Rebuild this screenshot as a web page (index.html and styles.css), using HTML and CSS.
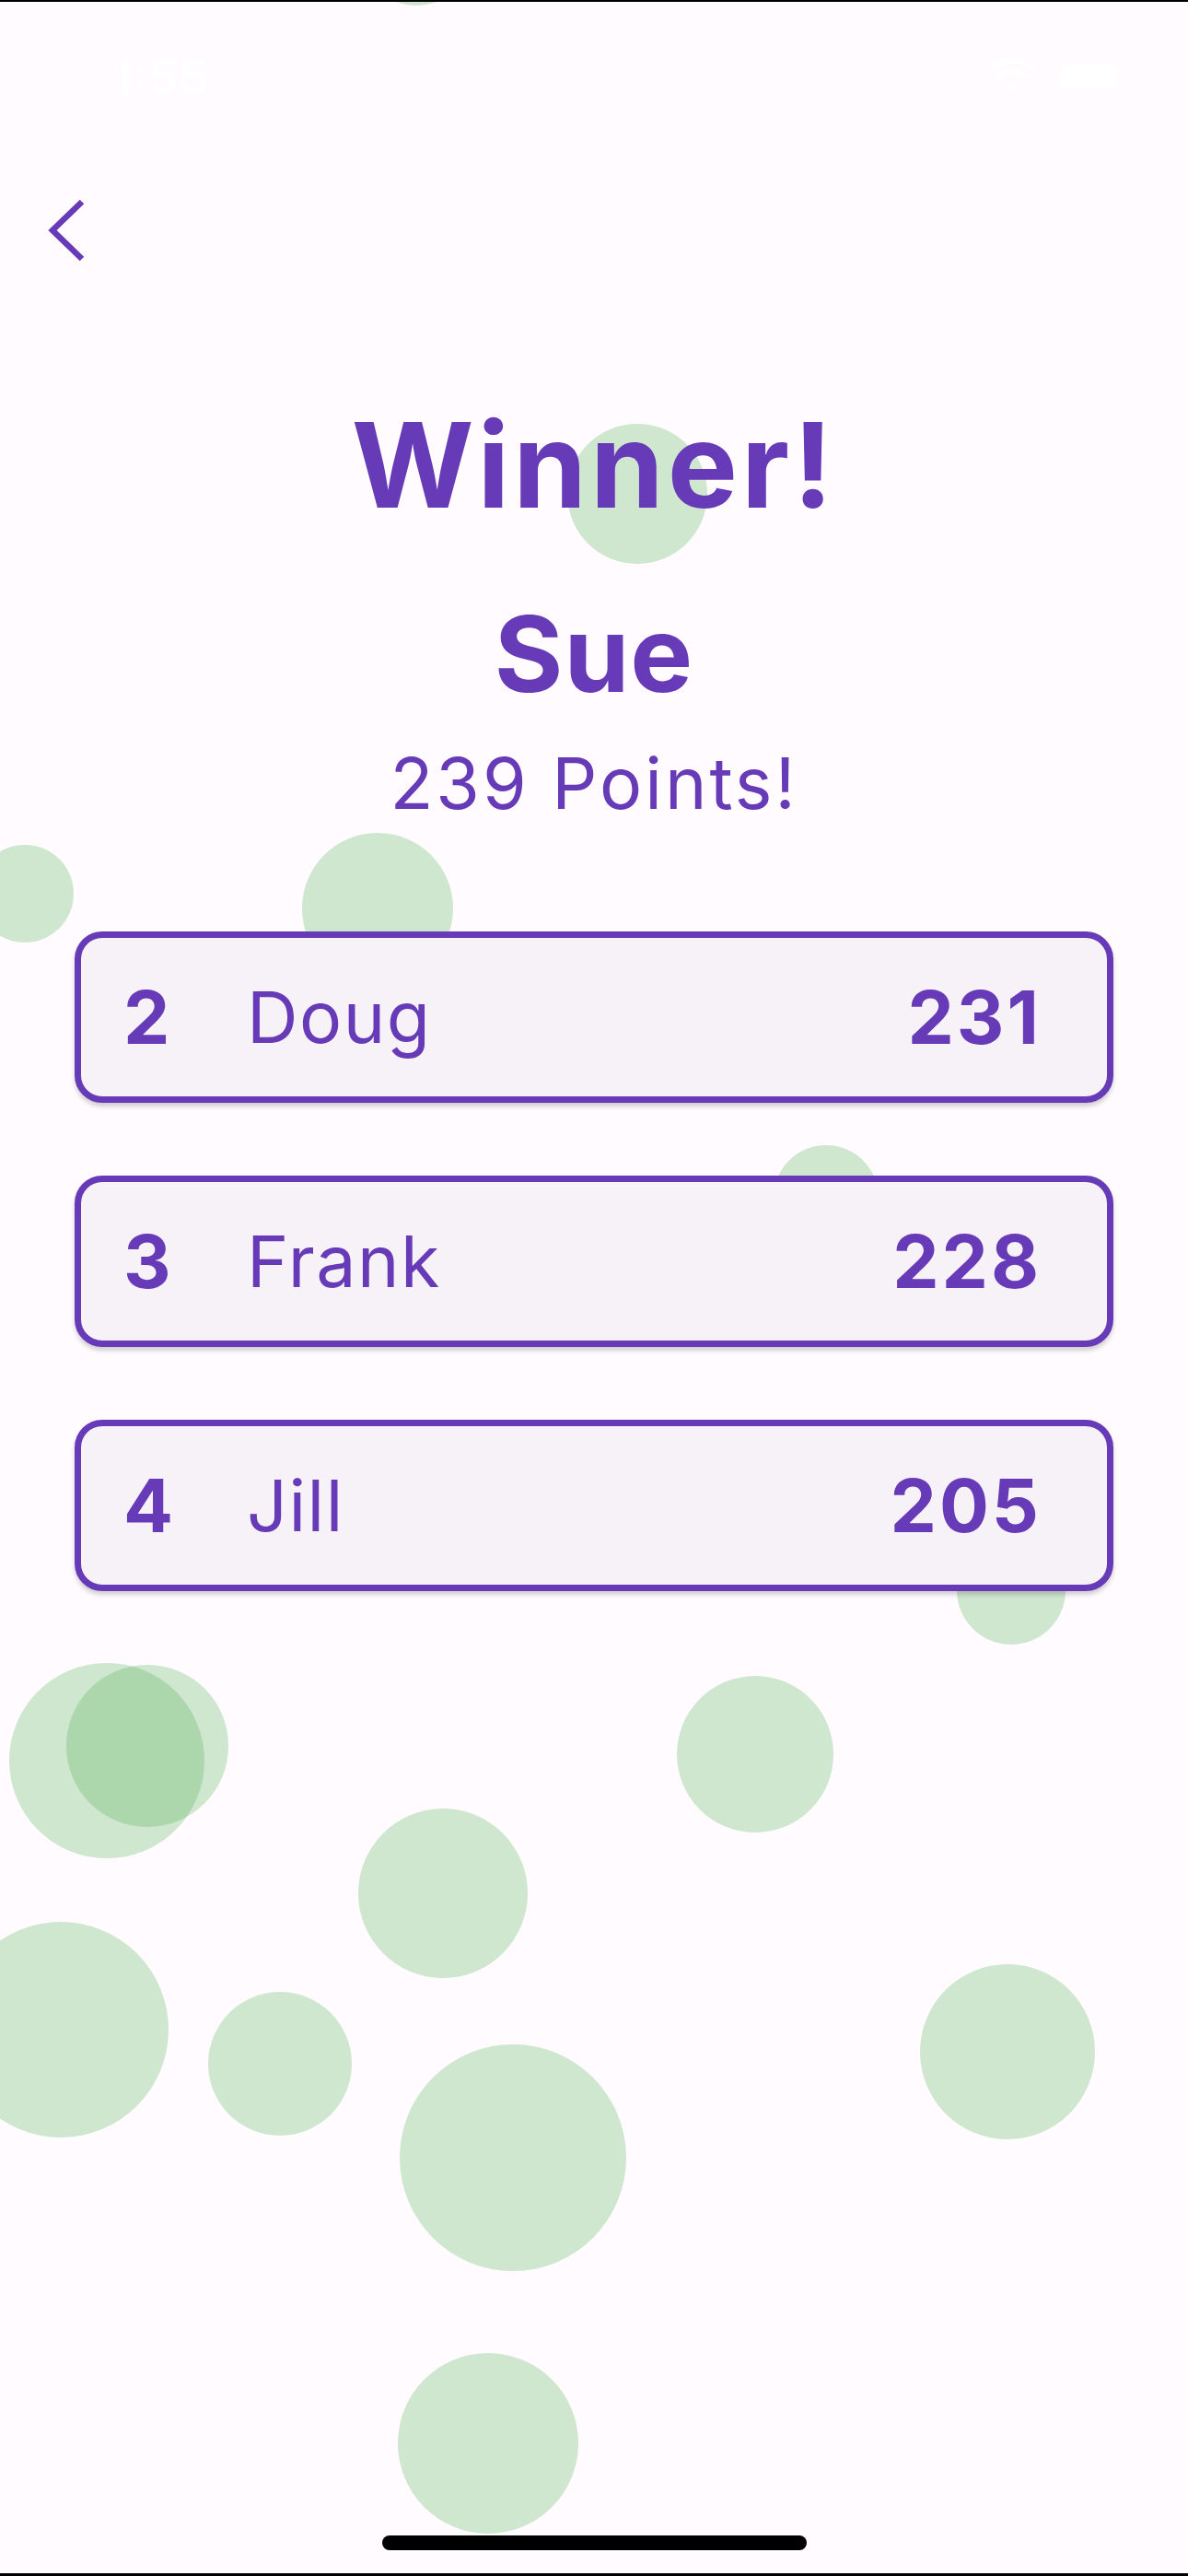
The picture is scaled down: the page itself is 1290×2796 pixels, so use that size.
FILE: index.html
```html
<!DOCTYPE html>
<html lang="en">
  <head>
    <meta charset="UTF-8" />
    <meta name="viewport" content="width=device-width, initial-scale=1.0" />
    <title>Results</title>
    <link rel="stylesheet" href="styles.css">
  </head>
  <body>
    <div class="screen">
      <div class="bubbles">
        <span class="bubble b1"></span>
        <span class="bubble b2"></span>
        <span class="bubble b3"></span>
        <span class="bubble b4"></span>
        <span class="bubble b5"></span>
        <span class="bubble b6"></span>
        <span class="bubble b7"></span>
        <span class="bubble b8"></span>
        <span class="bubble b9"></span>
        <span class="bubble b10"></span>
        <span class="bubble b11"></span>
        <span class="bubble b12"></span>
        <span class="bubble b13"></span>
        <span class="bubble b14"></span>
        <span class="bubble b15"></span>
      </div>

      <header class="status-bar">
        <span class="status-time">1:55</span>
        <div class="status-icons">
          <svg class="wifi" width="54" height="40" viewBox="0 0 54 40">
            <path d="M27 6c8.5 0 16 3.2 21.7 8.6l4-4.2C46 4 36.9 0 27 0S8 4 1.3 10.4l4 4.2C11 9.2 18.5 6 27 6z" fill="#fff" />
            <path d="M27 17.5c5.3 0 10 2 13.6 5.3l4-4.2C40 14.3 33.8 11.5 27 11.5s-13 2.8-17.6 7.1l4 4.2C17 19.5 21.7 17.5 27 17.5z" fill="#fff" />
            <path d="M27 29c2.2 0 4.1.8 5.6 2.1L27 37l-5.6-5.9C22.9 29.8 24.8 29 27 29z" fill="#fff" />
          </svg>
          <svg class="battery" width="84" height="40" viewBox="0 0 84 40">
            <rect x="2" y="2" width="72" height="36" rx="10" fill="none" stroke="#fff" stroke-width="3" opacity="0.6" />
            <rect x="7" y="7" width="62" height="26" rx="6" fill="#fff" />
            <path d="M78 14v12c2.5-1 4-3.4 4-6s-1.5-5-4-6z" fill="#fff" opacity="0.6" />
          </svg>
        </div>
      </header>

      <nav class="app-bar">
        <button class="back-button" aria-label="Back">
          <svg width="44" height="72" viewBox="0 0 44 72">
            <polyline points="38,5 6,36 38,67" fill="none" stroke="#673ab7" stroke-width="6.5" />
          </svg>
        </button>
      </nav>

      <main class="results">
        <h1 class="title">Winner!</h1>
        <h2 class="winner-name">Sue</h2>
        <p class="winner-points">239 Points!</p>

        <ol class="standings">
          <li class="player-card">
            <span class="rank">2</span>
            <span class="player-name">Doug</span>
            <span class="score">231</span>
          </li>
          <li class="player-card">
            <span class="rank">3</span>
            <span class="player-name">Frank</span>
            <span class="score">228</span>
          </li>
          <li class="player-card">
            <span class="rank">4</span>
            <span class="player-name">Jill</span>
            <span class="score">205</span>
          </li>
        </ol>
      </main>

      <div class="home-indicator"></div>
    </div>
  </body>
</html>
```

FILE: styles.css
```css
body {
  margin: 0;
  font-family: Inter, "Noto Sans", sans-serif;
  background-color: #fffbfe;
  color: #673ab7;
}

.screen {
  position: relative;
  width: 1290px;
  height: 2796px;
  box-sizing: border-box;
  border-top: 2px solid #000;
  border-bottom: 3px solid #000;
  overflow: hidden;
  background-color: #fffbfe;
}

/* confetti bubbles behind everything */
.bubbles {
  position: absolute;
  inset: 0;
  z-index: 0;
}

.bubble {
  position: absolute;
  border-radius: 50%;
  background-color: rgba(76, 175, 80, 0.27);
}

.b1 { left: 392px; top: -116px; width: 120px; height: 120px; }
.b2 { left: 616px; top: 458px; width: 152px; height: 152px; }
.b3 { left: -26px; top: 915px; width: 106px; height: 106px; }
.b4 { left: 328px; top: 902px; width: 164px; height: 164px; }
.b5 { left: 840px; top: 1241px; width: 114px; height: 114px; }
.b6 { left: 1039px; top: 1665px; width: 118px; height: 118px; }
.b7 { left: 10px; top: 1803px; width: 212px; height: 212px; }
.b8 { left: 72px; top: 1805px; width: 176px; height: 176px; }
.b9 { left: 735px; top: 1817px; width: 170px; height: 170px; }
.b10 { left: 389px; top: 1961px; width: 184px; height: 184px; }
.b11 { left: -51px; top: 2084px; width: 234px; height: 234px; }
.b12 { left: 226px; top: 2160px; width: 156px; height: 156px; }
.b13 { left: 434px; top: 2217px; width: 246px; height: 246px; }
.b14 { left: 999px; top: 2130px; width: 190px; height: 190px; }
.b15 { left: 432px; top: 2552px; width: 196px; height: 196px; }

.status-bar,
.app-bar,
.results {
  position: relative;
  z-index: 1;
}

.status-bar {
  height: 148px;
  box-sizing: border-box;
  padding: 56px 62px 0 122px;
  display: flex;
  justify-content: space-between;
  align-items: flex-start;
}

.status-time {
  font-size: 51px;
  font-weight: 700;
  line-height: 1;
  color: #fff;
}

.status-icons {
  display: flex;
  gap: 18px;
  padding-top: 5px;
}

.app-bar {
  height: 150px;
  box-sizing: border-box;
  padding: 64px 0 0 51px;
}

.back-button {
  padding: 0;
  border: none;
  background: none;
  cursor: pointer;
  display: block;
}

.back-button svg {
  display: block;
}

.results {
  display: flex;
  flex-direction: column;
  align-items: center;
  text-align: center;
}

.title {
  margin: 141px 0 0;
  font-size: 128px;
  font-weight: 700;
  line-height: 1;
  letter-spacing: 4px;
}

.winner-name {
  margin: 84px 0 0;
  font-size: 114px;
  font-weight: 700;
  line-height: 1;
  letter-spacing: 1px;
}

.winner-points {
  margin: 45px 0 0;
  font-size: 77px;
  font-weight: 400;
  line-height: 1;
  letter-spacing: 3px;
}

.standings {
  list-style: none;
  margin: 122px 0 0;
  padding: 0 81px;
  width: 100%;
  box-sizing: border-box;
  display: flex;
  flex-direction: column;
  gap: 79px;
}

.player-card {
  height: 186px;
  box-sizing: border-box;
  display: flex;
  align-items: center;
  padding: 0 71px 0 46px;
  border: 7px solid #673ab7;
  border-radius: 30px;
  background-color: #f6f2f8;
  box-shadow: 0 4px 5px rgba(0, 0, 0, 0.18);
  line-height: 1;
}

.rank {
  width: 134px;
  font-size: 80px;
  font-weight: 700;
  text-align: left;
}

.player-name {
  font-size: 77px;
  font-weight: 400;
  letter-spacing: 1.5px;
}

.score {
  margin-left: auto;
  font-size: 80px;
  font-weight: 700;
  letter-spacing: 3px;
}

.home-indicator {
  position: absolute;
  left: 415px;
  bottom: 25px;
  width: 461px;
  height: 16px;
  border-radius: 8px;
  background-color: #000;
  z-index: 2;
}
```
